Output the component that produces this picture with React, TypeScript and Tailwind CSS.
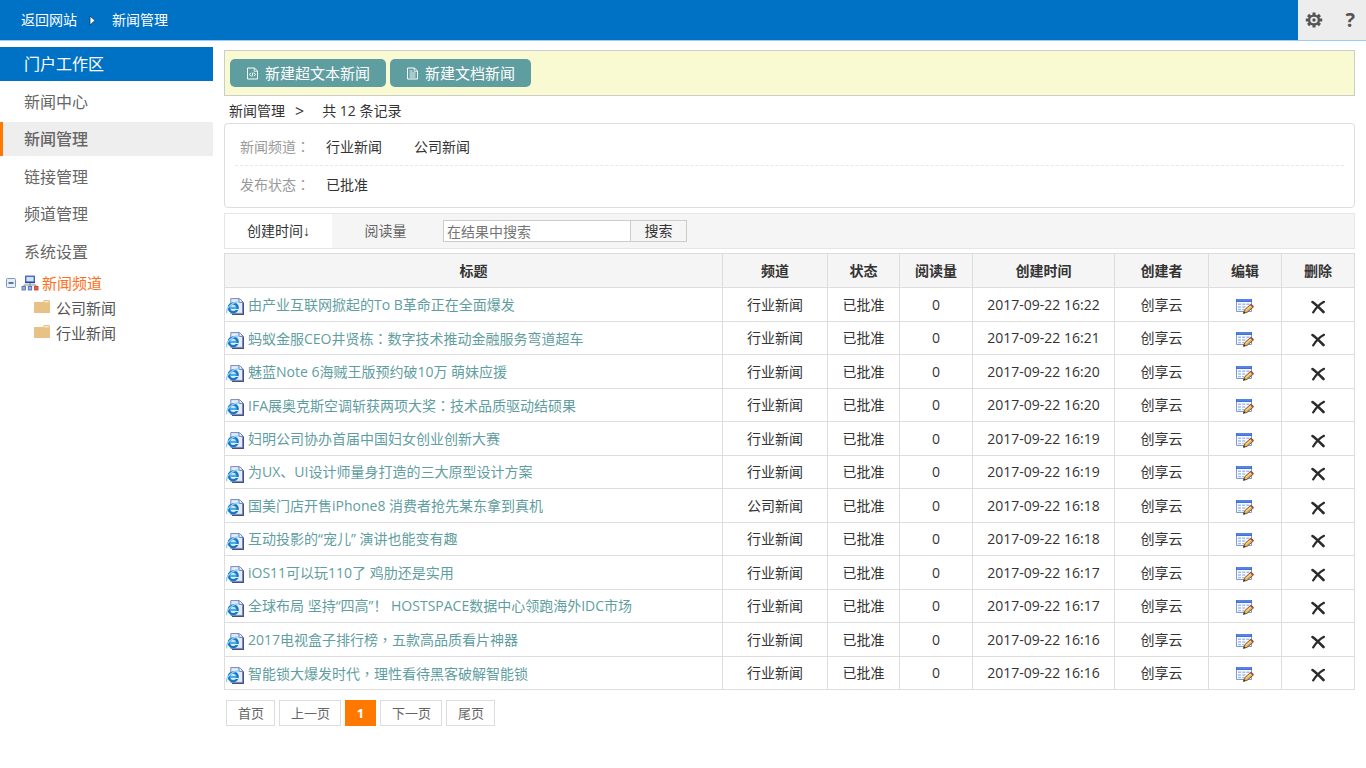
type News = {
  title: string;
  channel: string;
  time: string;
};

const NEWS: News[] = [
  { title: "由产业互联网掀起的To B革命正在全面爆发", channel: "行业新闻", time: "2017-09-22 16:22" },
  { title: "蚂蚁金服CEO井贤栋：数字技术推动金融服务弯道超车", channel: "行业新闻", time: "2017-09-22 16:21" },
  { title: "魅蓝Note 6海贼王版预约破10万 萌妹应援", channel: "行业新闻", time: "2017-09-22 16:20" },
  { title: "IFA展奥克斯空调斩获两项大奖：技术品质驱动结硕果", channel: "行业新闻", time: "2017-09-22 16:20" },
  { title: "妇明公司协办首届中国妇女创业创新大赛", channel: "行业新闻", time: "2017-09-22 16:19" },
  { title: "为UX、UI设计师量身打造的三大原型设计方案", channel: "行业新闻", time: "2017-09-22 16:19" },
  { title: "国美门店开售iPhone8 消费者抢先某东拿到真机", channel: "公司新闻", time: "2017-09-22 16:18" },
  { title: "互动投影的“宠儿” 演讲也能变有趣", channel: "行业新闻", time: "2017-09-22 16:18" },
  { title: "iOS11可以玩110了 鸡肋还是实用", channel: "行业新闻", time: "2017-09-22 16:17" },
  { title: "全球布局 坚持“四高”！ HOSTSPACE数据中心领跑海外IDC市场", channel: "行业新闻", time: "2017-09-22 16:17" },
  { title: "2017电视盒子排行榜，五款高品质看片神器", channel: "行业新闻", time: "2017-09-22 16:16" },
  { title: "智能锁大爆发时代，理性看待黑客破解智能锁", channel: "行业新闻", time: "2017-09-22 16:16" },
];

const MENU = ["新闻中心", "新闻管理", "链接管理", "频道管理", "系统设置"];

const COLUMNS = [
  { label: "标题", width: "" },
  { label: "频道", width: "w-[105px]" },
  { label: "状态", width: "w-[72px]" },
  { label: "阅读量", width: "w-[73px]" },
  { label: "创建时间", width: "w-[142px]" },
  { label: "创建者", width: "w-[94px]" },
  { label: "编辑", width: "w-[73px]" },
  { label: "删除", width: "w-[73px]" },
];

// The TC face centres the full-width colon and comma in their box
function Punctuated({ text }: { text: string }) {
  return (
    <>
      {text.split(/([：，])/).map((part, i) =>
        part === "：" || part === "，" ? (
          <span key={i} className="font-['Noto_Sans_CJK_TC',sans-serif]" lang="zh-Hant">
            {part}
          </span>
        ) : (
          part
        ),
      )}
    </>
  );
}

function GearIcon() {
  return (
    <svg width="18" height="16" viewBox="0 0 18 16" aria-hidden="true">
      <g fill="#555">
        <rect x="7.5" y=".5" width="3" height="15" />
        <rect x=".8" y="6.5" width="16.4" height="3" />
        <rect x="7.5" y=".2" width="3" height="15.6" transform="rotate(50 9 8)" />
        <rect x="7.5" y=".2" width="3" height="15.6" transform="rotate(-50 9 8)" />
      </g>
      <ellipse cx="9" cy="8" rx="4.9" ry="4.4" fill="#ededed" stroke="#555" strokeWidth="2.4" />
      <circle cx="9" cy="8" r="1.7" fill="#555" />
    </svg>
  );
}

function DocIcon({ code = false }: { code?: boolean }) {
  return (
    <svg width="13" height="13" viewBox="0 0 13 13" fill="none" stroke="#fff" aria-hidden="true">
      <path d="M1.5 1h7L11.5 4v8h-10z" />
      <path d="M8.2 1v3.3h3.3" strokeWidth=".8" />
      {code ? (
        <path d="M5 5.8 3.5 7.5 5 9.2M8 5.8l1.5 1.7L8 9.2M7 5.5l-1 4" strokeWidth="1" />
      ) : (
        <path d="M3.5 4h3M3.5 6h6M3.5 8h6M3.5 10h6" strokeWidth=".9" />
      )}
    </svg>
  );
}

function IePageIcon() {
  return (
    <svg width="18" height="17" viewBox="0 0 18 17" className="shrink-0" aria-hidden="true">
      <path d="M6 1h8.5L18 4.8V17H6z" fill="#4a4f7c" />
      <path d="M4.8.6h8.6l3.1 3.3v11.5H4.8z" fill="#e4ebfb" stroke="#7488c4" />
      <path d="M13 .6v3.7h3.5" fill="#fff" stroke="#4d5f9e" strokeWidth=".9" />
      <circle cx="7.2" cy="9.8" r="5.6" fill="#4ea8e2" />
      <circle cx="7.2" cy="9.8" r="4.4" fill="none" stroke="#1a74bd" strokeWidth="2" />
      <path d="M4.7 8.7a2.6 2.3 0 0 1 5 0z" fill="#e3f5ff" />
      <path d="M4.7 10.9h8.1l-.4 1.1H9.3a2.6 2.2 0 0 1-4.6-1.1z" fill="#e3f5ff" />
      <path d="M1 15.2C-1 11 7 2.6 14 4" fill="none" stroke="#8fd0f5" strokeWidth="1.2" />
    </svg>
  );
}

function EditIcon() {
  return (
    <svg width="18" height="16" viewBox="0 0 18 16" aria-hidden="true">
      <path d="M.5 1.5h15v12H.5z" fill="#f7faff" stroke="#7d9ad8" />
      <path d="M0 1h16v3H0z" fill="#3f70dc" />
      <path d="M1 2h14" stroke="#7ea2f0" strokeWidth=".8" />
      <path d="M2 5.5h3v1.6H2zM6.2 5.5h3v1.6h-3zM10.4 5.5h3v1.6h-3zM2 8.2h3v1.6H2zM6.2 8.2h3v1.6h-3zM2 10.9h3v1.4H2zM6.2 10.9h1.8v1.4H6.2z" fill="#a7bce8" />
      <path d="m7.4 15.4 1.2-3.6 6-5.4 2.8 2.6-6.4 5.4z" fill="#e8b054" stroke="#5b4326" strokeWidth=".8" />
      <path d="m14 6.9 1.2-1.2 2.7 2.6-1.2 1.2z" fill="#a34747" />
      <path d="m7.4 15.4.6-1.9 1.4 1.3z" fill="#222" />
      <path d="m10 12.4 5-4.4" stroke="#ffe3a0" />
    </svg>
  );
}

function DeleteIcon() {
  return (
    <svg width="14" height="14" viewBox="0 0 14 14" fill="none" stroke="#2b2b2b" strokeLinecap="round" aria-hidden="true">
      <path d="M1.5 2C5 4.5 9 8.5 12.5 12" strokeWidth="2.6" />
      <path d="M13 1.8C9 4 5 8 2.2 12.3" strokeWidth="2.2" />
    </svg>
  );
}

function OrgIcon() {
  return (
    <svg width="18" height="16" viewBox="0 0 18 16" aria-hidden="true">
      <path d="M9 8v3M3 11.5V10h12v1.5" fill="none" stroke="#8a8a8a" />
      <rect x="4.7" y="1.2" width="8.6" height="5.8" fill="#cfe2ff" stroke="#2d55b5" strokeWidth="1.2" />
      <path d="M4 7.6h10" stroke="#2346a0" strokeWidth="1.2" />
      <rect x="1" y="11.5" width="3.4" height="3.5" fill="#8fb0ee" stroke="#4468b8" strokeWidth=".8" />
      <rect x="7.3" y="11.5" width="3.4" height="3.5" fill="#8fb0ee" stroke="#4468b8" strokeWidth=".8" />
      <rect x="13.6" y="11.5" width="3.4" height="3.5" fill="#e8604a" stroke="#c03824" strokeWidth=".8" />
    </svg>
  );
}

function FolderIcon() {
  return (
    <svg width="16" height="13" viewBox="0 0 16 13" aria-hidden="true">
      <path d="M0 2h9l1-2h5l1 1v12H0z" fill="#e8c184" />
      <path d="M10.2 1.8h4.6" stroke="#fff" strokeWidth=".9" />
    </svg>
  );
}

function Sidebar() {
  return (
    <aside className="w-[213px] shrink-0 pt-1.5">
      <h2 className="flex h-[34px] items-center bg-[#0072c6] pl-6 text-base text-white">门户工作区</h2>
      <nav>
        {MENU.map((item) => (
          <a
            key={item}
            href="#"
            className={`flex h-[34px] items-center text-base text-[#666] odd:mt-1 even:mt-[3px] ${
              item === "新闻管理" ? "border-l-[3px] border-[#ff7800] bg-[#eee] pl-[21px] font-medium" : "pl-6"
            }`}
          >
            {item}
          </a>
        ))}
      </nav>
      <ul className="mt-px text-[15px] text-[#555]">
        <li>
          <div className="flex h-[25px] items-center pl-1.5">
            <button type="button" aria-label="折叠" className="mr-[5px]">
              <svg width="10" height="10" viewBox="0 0 10 10" aria-hidden="true">
                <rect x=".5" y=".5" width="9" height="9" rx="1" fill="#e6eef9" stroke="#7b9ac0" />
                <path d="M2.5 5h5" stroke="#222" strokeWidth="1.2" />
              </svg>
            </button>
            <OrgIcon />
            <a href="#" className="ml-[3px] text-[#ff7021]">新闻频道</a>
          </div>
          <ul>
            {["公司新闻", "行业新闻"].map((name) => (
              <li key={name} className="flex h-[25px] items-center gap-1.5 pl-[34px]">
                <span className="pb-0.5">
                  <FolderIcon />
                </span>
                <a href="#">{name}</a>
              </li>
            ))}
          </ul>
        </li>
      </ul>
    </aside>
  );
}

function Filters() {
  return (
    <section className="rounded border border-[#ddd] px-2.5">
      <div className="flex h-[42px] items-center border-b border-dashed border-[#e8e8e8] pt-1 pl-[5px]">
        <span className="w-[86px] text-[#999]">
          <Punctuated text="新闻频道：" />
        </span>
        <a href="#" className="mr-8">行业新闻</a>
        <a href="#">公司新闻</a>
      </div>
      <div className="flex h-[41px] items-center pb-1 pl-[5px]">
        <span className="w-[86px] text-[#999]">
          <Punctuated text="发布状态：" />
        </span>
        <a href="#">已批准</a>
      </div>
    </section>
  );
}

function SortBar() {
  return (
    <div className="mt-[5px] flex h-9 items-stretch border border-[#e6e6e6] bg-[#f5f5f5]">
      <button type="button" className="w-[107px] bg-white">
        创建时间<span className="font-['Liberation_Sans',sans-serif] font-bold">↓</span>
      </button>
      <button type="button" className="w-[107px] text-[#666]">阅读量</button>
      <form className="ml-1 flex items-center" onSubmit={(e) => e.preventDefault()}>
        <input
          type="text"
          aria-label="在结果中搜索"
          placeholder="在结果中搜索"
          className="h-[22px] w-[188px] border border-[#ccc] bg-white px-[3px] placeholder:text-[#757575]"
        />
        <button type="submit" className="-ml-px h-[22px] w-[57px] border border-[#ccc] leading-none">
          搜索
        </button>
      </form>
    </div>
  );
}

function NewsTable() {
  return (
    <table className="mt-1 w-full table-fixed border-collapse border border-[#ddd] text-center">
      <thead>
        <tr className="h-[34px] bg-[#f5f5f5]">
          {COLUMNS.map((col) => (
            <th key={col.label} className={`border border-[#ddd] p-0 font-bold ${col.width}`}>
              {col.label}
            </th>
          ))}
        </tr>
      </thead>
      <tbody>
        {NEWS.map((news) => (
          <tr key={news.title} className="odd:h-[34px] even:h-[33px]">
            <td className="border border-[#ddd] p-0 pl-px">
              <a href="#" className="flex items-center gap-1 text-[#5f9ea0]">
                <span className="pt-1">
                  <IePageIcon />
                </span>
                <span className="truncate">
                  <Punctuated text={news.title} />
                </span>
              </a>
            </td>
            <td className="border border-[#ddd] p-0">{news.channel}</td>
            <td className="border border-[#ddd] p-0">已批准</td>
            <td className="border border-[#ddd] p-0">0</td>
            <td className="border border-[#ddd] p-0">{news.time}</td>
            <td className="border border-[#ddd] p-0">创享云</td>
            <td className="border border-[#ddd] p-0">
              <button type="button" aria-label="编辑" className="mx-auto block pt-0.5">
                <EditIcon />
              </button>
            </td>
            <td className="border border-[#ddd] p-0">
              <button type="button" aria-label="删除" className="mx-auto block pt-1">
                <DeleteIcon />
              </button>
            </td>
          </tr>
        ))}
      </tbody>
    </table>
  );
}

function Pager() {
  const link = "flex h-[26px] items-center border border-[#ddd] pr-2.5 pl-[11px] text-[13px] text-[#666]";
  return (
    <nav className="mt-2.5 ml-0.5 flex gap-1">
      <a href="#" className={link}>首页</a>
      <a href="#" className={link}>上一页</a>
      <a href="#" className="flex h-[26px] w-[31px] items-center justify-center bg-[#ff7800] text-[13px] font-bold text-white">
        1
      </a>
      <a href="#" className={link}>下一页</a>
      <a href="#" className={link}>尾页</a>
    </nav>
  );
}

export default function App() {
  return (
    <div className="min-h-screen bg-white font-['Open_Sans','Noto_Sans_CJK_SC',sans-serif] text-sm leading-5 text-[#333]">
      <header className="flex h-[41px] items-stretch border-b border-[#99ccff] bg-[#0072c6] text-white">
        <div className="flex flex-1 items-center pl-[21px]">
          <a href="#">返回网站</a>
          <svg width="7" height="11" viewBox="0 0 7 11" className="mr-4 ml-3" aria-hidden="true">
            <path d="M1 1v9l5-4.5z" fill="#fff" stroke="#0a3a66" strokeWidth=".8" />
          </svg>
          <a href="#">新闻管理</a>
        </div>
        <div className="flex w-[68px] items-center justify-between bg-[#ededed] pr-[11px] pl-[7px]">
          <button type="button" aria-label="设置">
            <GearIcon />
          </button>
          <button type="button" aria-label="帮助" className="text-xl font-bold text-[#555]">?</button>
        </div>
      </header>

      <div className="flex">
        <Sidebar />
        <main className="min-w-0 flex-1 pt-[9px] pr-[11px] pl-[11px]">
          <div className="flex h-[46px] items-center gap-1 border border-[#ccc] bg-[#fafad2] px-[5px]">
            <button type="button" className="flex h-7 items-center gap-1.5 rounded-[5px] bg-[#5f9ea0] px-4 text-[15px] text-white">
              <DocIcon code />
              新建超文本新闻
            </button>
            <button type="button" className="flex h-7 items-center gap-1.5 rounded-[5px] bg-[#5f9ea0] px-4 text-[15px] text-white">
              <DocIcon />
              新建文档新闻
            </button>
          </div>
          <div className="flex h-[27px] items-center pt-[3px] pl-[5px]">
            <a href="#">新闻管理</a>
            <span className="mr-[18px] ml-2.5 text-base">&gt;</span>
            <span>共 12 条记录</span>
          </div>
          <Filters />
          <SortBar />
          <NewsTable />
          <Pager />
        </main>
      </div>
    </div>
  );
}
